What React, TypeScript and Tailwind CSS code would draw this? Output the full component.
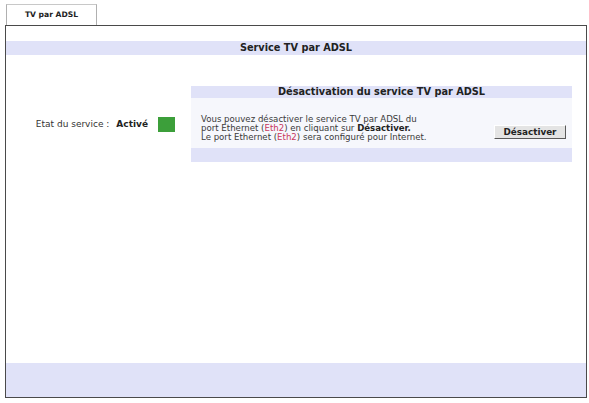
import React from "react";

export default function App() {
  return (
    <div className="w-[589px] h-[403px] bg-white text-[#333] font-['DejaVu_Sans',sans-serif] overflow-hidden">
      <div className="pt-[4px] pl-[6px] flex">
        <div className="w-[91px] h-[21px] border border-b-0 border-[#b0b0b0] border-t-[#c8c8c8] bg-white flex items-center justify-center text-[7.6px] font-bold text-[#222] leading-none">
          TV par ADSL
        </div>
      </div>
      <div className="ml-[5px] w-[582px] h-[373px] border border-[#4a4a4a] flex flex-col">
        <div className="mt-[15px] h-[14px] bg-[#e0e2f8] flex items-center justify-center text-[9.75px] font-bold text-[#222] leading-none">
          Service TV par ADSL
        </div>
        <div className="mt-[31px] flex items-center">
          <div className="w-[185px] flex items-center justify-end pr-[16px] text-[9px] leading-none">
            <span>Etat du service :</span>
            <span className="ml-[7px] font-bold text-[#222]">Activé</span>
            <div className="ml-[10px] w-[17px] h-[15px] bg-[#3c9f3a]"></div>
          </div>
          <div className="w-[381px] flex flex-col">
            <div className="h-[12px] bg-[#e0e2f8] flex items-center justify-center text-[9.75px] font-bold text-[#222] leading-none">
              Désactivation du service TV par ADSL
            </div>
            <div className="h-[50px] bg-[#f6f7fc] flex items-start justify-between pl-[10px] pr-[6px] pt-[17px]">
              <div className="text-[8.6px] leading-[9px] whitespace-nowrap text-[#3a3a3a]">
                <div>Vous pouvez désactiver le service TV par ADSL du</div>
                <div>
                  port Ethernet (<span className="text-[#c8385e]">Eth2</span>) en cliquant sur <span className="font-bold text-[#222]">Désactiver.</span>
                </div>
                <div>
                  Le port Ethernet (<span className="text-[#c8385e]">Eth2</span>) sera configuré pour Internet.
                </div>
              </div>
              <button className="mt-[10px] w-[72px] h-[14px] bg-[#e4e4e4] border border-t-[#ffffff] border-l-[#ffffff] border-r-[#5a5a5a] border-b-[#5a5a5a] flex items-center justify-center text-[8.8px] font-bold text-[#222] leading-none">
                Désactiver
              </button>
            </div>
            <div className="h-[14px] bg-[#e0e2f8]"></div>
          </div>
        </div>
        <div className="flex-1"></div>
        <div className="h-[34px] bg-[#e0e2f8]"></div>
      </div>
    </div>
  );
}
